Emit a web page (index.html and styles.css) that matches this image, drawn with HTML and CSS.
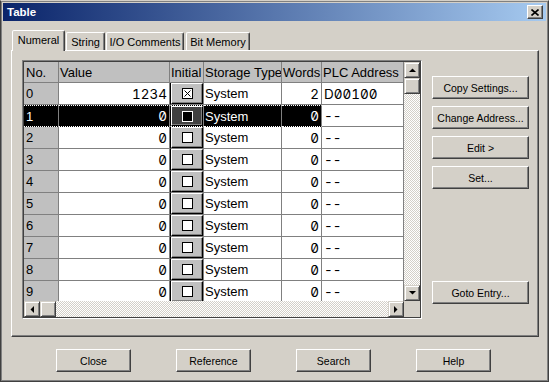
FILE: index.html
```html
<!DOCTYPE html>
<html lang="en">
<head>
  <meta charset="UTF-8">
  <title>Table</title>
  <link rel="stylesheet" href="styles.css">
</head>
<body>
  <div class="window">

    <!-- Title bar -->
    <div class="titlebar">
      <span class="title">Table</span>
      <div class="close-btn">
        <svg width="8" height="7" viewBox="0 0 8 7"><path d="M0.5 0.5L7.5 6.5M7.5 0.5L0.5 6.5" stroke="#000" stroke-width="1.6"/></svg>
      </div>
    </div>

    <div class="dialog">
      <div class="tabs">
        <div class="tab active t-num">Numeral</div>
        <div class="tab t-str">String</div>
        <div class="tab t-io">I/O Comments</div>
        <div class="tab t-bit">Bit Memory</div>
      </div>

      <div class="panel">
        <!-- Grid -->
        <div class="grid-frame">
          <div class="grid-inner">
            <div class="sheet">
              <div class="row head">
                <div class="no">No.</div>
                <div>Value</div>
                <div>Initial</div>
                <div>Storage Type</div>
                <div>Words</div>
                <div>PLC Address</div>
              </div>
              <div class="row">
                <div class="no">0</div>
                <div class="num">1234</div>
                <div class="init"><div class="cb"><div class="chk"><svg width="9" height="9" viewBox="0 0 9 9"><path d="M1.5 1.5L7.5 7.5M7.5 1.5L1.5 7.5" stroke="#000" stroke-width="1"/></svg></div></div></div>
                <div>System</div>
                <div class="num">2</div>
                <div class="addr">D00100</div>
              </div>
              <div class="row sel">
                <div class="no">1</div>
                <div class="num">0</div>
                <div class="init"><div class="cb"><div class="chk"></div></div></div>
                <div>System</div>
                <div class="num">0</div>
                <div class="addr">--</div>
              </div>
              <div class="row">
                <div class="no">2</div>
                <div class="num">0</div>
                <div class="init"><div class="cb"><div class="chk"></div></div></div>
                <div>System</div>
                <div class="num">0</div>
                <div class="addr">--</div>
              </div>
              <div class="row">
                <div class="no">3</div>
                <div class="num">0</div>
                <div class="init"><div class="cb"><div class="chk"></div></div></div>
                <div>System</div>
                <div class="num">0</div>
                <div class="addr">--</div>
              </div>
              <div class="row">
                <div class="no">4</div>
                <div class="num">0</div>
                <div class="init"><div class="cb"><div class="chk"></div></div></div>
                <div>System</div>
                <div class="num">0</div>
                <div class="addr">--</div>
              </div>
              <div class="row">
                <div class="no">5</div>
                <div class="num">0</div>
                <div class="init"><div class="cb"><div class="chk"></div></div></div>
                <div>System</div>
                <div class="num">0</div>
                <div class="addr">--</div>
              </div>
              <div class="row">
                <div class="no">6</div>
                <div class="num">0</div>
                <div class="init"><div class="cb"><div class="chk"></div></div></div>
                <div>System</div>
                <div class="num">0</div>
                <div class="addr">--</div>
              </div>
              <div class="row">
                <div class="no">7</div>
                <div class="num">0</div>
                <div class="init"><div class="cb"><div class="chk"></div></div></div>
                <div>System</div>
                <div class="num">0</div>
                <div class="addr">--</div>
              </div>
              <div class="row">
                <div class="no">8</div>
                <div class="num">0</div>
                <div class="init"><div class="cb"><div class="chk"></div></div></div>
                <div>System</div>
                <div class="num">0</div>
                <div class="addr">--</div>
              </div>
              <div class="row">
                <div class="no">9</div>
                <div class="num">0</div>
                <div class="init"><div class="cb"><div class="chk"></div></div></div>
                <div>System</div>
                <div class="num">0</div>
                <div class="addr">--</div>
              </div>
            </div>

            <div class="vscroll">
              <div class="sbtn"><svg width="7" height="4" viewBox="0 0 7 4"><path d="M0 4H7L3.5 0.5Z"/></svg></div>
              <div class="sbtn"></div>
              <div class="track"></div>
              <div class="sbtn"><svg width="7" height="4" viewBox="0 0 7 4"><path d="M0 0H7L3.5 3.5Z"/></svg></div>
            </div>
            <div class="hscroll">
              <div class="sbtn"><svg width="4" height="7" viewBox="0 0 4 7"><path d="M4 0V7L0.5 3.5Z"/></svg></div>
              <div class="sbtn"></div>
              <div class="track"></div>
              <div class="sbtn"><svg width="4" height="7" viewBox="0 0 4 7"><path d="M0 0V7L3.5 3.5Z"/></svg></div>
            </div>
            <div class="corner"></div>
          </div>
        </div>

        <!-- Side buttons -->
        <div class="side">
          <div class="btn">Copy Settings...</div>
          <div class="btn">Change Address...</div>
          <div class="btn">Edit &gt;</div>
          <div class="btn">Set...</div>
          <div class="btn goto">Goto Entry...</div>
        </div>
      </div>

      <div class="footer">
        <div class="btn wide">Close</div>
        <div class="btn wide">Reference</div>
        <div class="btn wide">Search</div>
        <div class="btn wide">Help</div>
      </div>
    </div>
  </div>
</body>
</html>
```

FILE: styles.css
```css
/* Global */
body {
  margin: 0;
  background: #d4d0c8;
  font-family: "Liberation Sans", Arial, sans-serif;
  font-size: 10.5px;
  color: #000;
}

/* Window frame */
.window {
  width: 549px;
  height: 382px;
  box-sizing: border-box;
  border: 1px solid;
  border-color: #d4d0c8 #404040 #404040 #404040;
  box-shadow: inset 1px 1px #808080, inset -1px -1px #808080;
  padding: 2px;
  display: flex;
  flex-direction: column;
}

.titlebar {
  height: 18px;
  flex: none;
  background: linear-gradient(to right, #0a246a, #a6caf0);
  color: #fff;
  display: flex;
  align-items: center;
  justify-content: space-between;
  padding: 0 3px 0 4px;
}
.title {
  font-weight: bold;
  font-size: 11.5px;
}
.close-btn {
  width: 16px;
  height: 14px;
  box-sizing: border-box;
  background: #d4d0c8;
  border: 1px solid;
  border-color: #fff #404040 #404040 #fff;
  box-shadow: inset -1px -1px #808080;
  display: flex;
  align-items: center;
  justify-content: center;
}
.close-btn svg { display: block; }

/* Dialog body */
.dialog {
  flex: 1;
  padding: 9px 7px 0 8px;
  display: flex;
  flex-direction: column;
}

/* Tabs */
.tabs {
  display: flex;
  align-items: flex-end;
  height: 20px;
  padding-left: 1px;
}
.tab {
  height: 18px;
  box-sizing: border-box;
  border: 1px solid;
  border-bottom: none;
  border-color: #fff #404040 transparent #fff;
  border-radius: 2px 2px 0 0;
  box-shadow: inset -1px 0 #808080;
  display: flex;
  align-items: center;
  justify-content: center;
  margin-left: 1px;
  font-size: 11px;
}
.tab.active {
  height: 21px;
  margin-left: 0;
  margin-bottom: -1px;
  padding-bottom: 2px;
  background: #d4d0c8;
  position: relative;
  z-index: 1;
}
.t-num { width: 53px; }
.t-str { width: 39px; }
.t-io { width: 78px; }
.t-bit { width: 64px; margin-left: 2px; }

.panel {
  height: 287px;
  box-sizing: border-box;
  border: 1px solid;
  border-color: #fff #404040 #404040 #fff;
  box-shadow: inset -1px -1px #808080;
  padding: 9px 9px 0 10px;
  display: flex;
  align-items: flex-start;
}

/* Grid */
.grid-frame {
  width: 400px;
  height: 259px;
  box-sizing: border-box;
  border: 1px solid;
  border-color: #808080 #fff #fff #808080;
}
.grid-inner {
  height: 100%;
  box-sizing: border-box;
  border: 1px solid #404040;
  display: grid;
  grid-template-columns: 380px 16px;
  grid-template-rows: 239px 16px;
  background: #fff;
}
.sheet {
  overflow: hidden;
  font-size: 13px;
}
.row {
  display: grid;
  grid-template-columns: 35px 111px 34px 78px 40px 82px;
  height: 22px;
}
.row > div {
  box-sizing: border-box;
  border-right: 1px solid #808080;
  border-bottom: 1px solid #808080;
  padding: 0 1px;
  display: flex;
  align-items: center;
  white-space: nowrap;
  overflow: hidden;
}
.row.head { height: 21px; }
.row.head > div,
.row > .no { background: #c0c0c0; }
.row > .no { padding-left: 2px; }

.row > .num,
.row > .addr {
  font-family: Inter, "DejaVu Sans", sans-serif;
  font-variant-numeric: slashed-zero tabular-nums;
  font-size: 13.5px;
}
.row > .num {
  justify-content: flex-end;
  padding-right: 2px;
}
.row > .addr { padding-left: 2px; }

.row > .init {
  padding: 0;
  border-left: 1px solid #000;
}
.cb {
  align-self: stretch;
  flex: 1;
  box-sizing: border-box;
  border: 1px solid;
  border-color: #fff #000 #000 #fff;
  box-shadow: inset -1px -1px #808080;
  background: #c0c0c0;
  display: flex;
  align-items: center;
  justify-content: center;
}
.chk {
  width: 11px;
  height: 11px;
  box-sizing: border-box;
  border: 1px solid #000;
  background: #fff;
}
.chk svg { display: block; }

/* Selected row */
.row.sel > div:not(.addr) {
  background: #000;
  color: #fff;
  border-top: 1px dotted #fff;
  border-bottom: 1px dotted #fff;
}
.row.sel > .no,
.row.sel .cb { background: #404040; }
.row.sel .chk {
  border-color: #fff;
  background: #000;
}

/* Scrollbars */
.sbtn {
  width: 16px;
  height: 16px;
  flex: none;
  box-sizing: border-box;
  background: #d4d0c8;
  border: 1px solid;
  border-color: #d4d0c8 #404040 #404040 #d4d0c8;
  box-shadow: inset 1px 1px #fff, inset -1px -1px #808080;
  display: flex;
  align-items: center;
  justify-content: center;
}
.sbtn svg { display: block; }
.vscroll,
.hscroll {
  display: flex;
  background: conic-gradient(#fff 0 25%, #d4d0c8 0 50%, #fff 0 75%, #d4d0c8 0) 0 0 / 2px 2px;
}
.vscroll { flex-direction: column; }
.track { flex: 1; }
.corner { background: #d4d0c8; }

/* Buttons */
.btn {
  width: 97px;
  height: 23px;
  box-sizing: border-box;
  background: #d4d0c8;
  border: 1px solid;
  border-color: #fff #404040 #404040 #fff;
  box-shadow: inset -1px -1px #808080;
  display: flex;
  align-items: center;
  justify-content: center;
  white-space: nowrap;
}
.side {
  width: 97px;
  margin-left: 10px;
  padding-top: 16px;
  display: flex;
  flex-direction: column;
  gap: 7px;
}
.side .goto { margin-top: 85px; }

.footer {
  display: flex;
  gap: 45px;
  padding-left: 45px;
  margin-top: 12px;
}
.btn.wide { width: 75px; }
```
